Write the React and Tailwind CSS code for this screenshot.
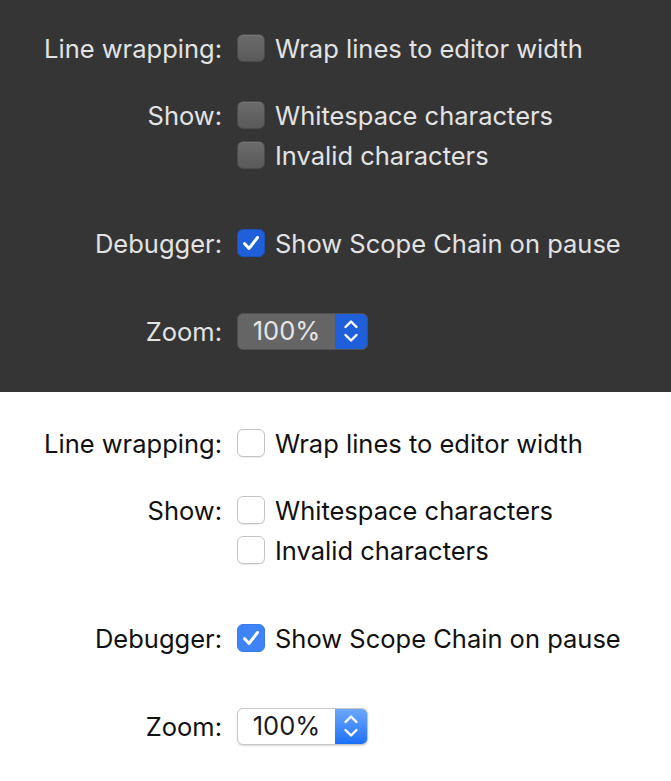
const THEMES = {
  dark: {
    wrap: 'bg-[#353535] pt-[28px] pb-[41px] text-[#e3e3e3]',
    box: 'bg-gradient-to-b from-[#6b6b6b] to-[#5a5a5a] border border-[#4a4a4a] shadow-[inset_0_1px_0_rgba(255,255,255,0.08)]',
    checked: 'bg-[#1f5fd9] border border-[#1a52bd]',
    select: 'bg-[#656565] border border-[#505050] text-[#e6e6e6]',
    stepper: 'bg-[#1f5fd9]',
  },
  light: {
    wrap: 'bg-white pt-[31px] pb-[35px] text-[#111111]',
    box: 'bg-white border border-[#c4c4c4] shadow-[0_1px_1px_rgba(0,0,0,0.08)]',
    checked: 'bg-[#3e84f7] border border-[#3a7bea]',
    select: 'bg-white border border-[#c8c8c8] shadow-[0_1px_2px_rgba(0,0,0,0.15)] text-[#1c1c1c]',
    stepper: 'bg-gradient-to-b from-[#6aa8fd] to-[#1a6ff7]',
  },
};

function Checkbox({ theme, checked, label }) {
  const t = THEMES[theme];
  return (
    <div className="flex items-center h-[40px]">
      <div className={`w-[28px] h-[28px] rounded-[6px] flex items-center justify-center ${checked ? t.checked : t.box}`}>
        {checked && (
          <svg width="22" height="22" viewBox="0 0 22 22" fill="none">
            <path d="M4.5 11.5l4.5 5 8.5-11" stroke="white" strokeWidth="3" strokeLinecap="round" strokeLinejoin="round" />
          </svg>
        )}
      </div>
      <span className="ml-[10px] whitespace-nowrap pt-[2px]">{label}</span>
    </div>
  );
}

function Row({ label, children, className = '' }) {
  return (
    <div className={`grid grid-cols-[222px_1fr] ${className}`}>
      <div className="h-[40px] pt-[2px] flex items-center justify-end whitespace-nowrap">{label}</div>
      <div className="pl-[15px]">{children}</div>
    </div>
  );
}

function ZoomSelect({ theme }) {
  const t = THEMES[theme];
  return (
    <div className="h-[40px] flex items-center">
      <div className={`flex w-[131px] h-[37px] rounded-[6px] overflow-hidden ${t.select}`}>
        <div className="flex-1 flex items-center justify-center pt-[1px]">100%</div>
        <div className={`w-[32px] flex items-center justify-center ${t.stepper}`}>
          <svg width="20" height="28" viewBox="0 0 20 28" fill="none">
            <path d="M4.5 10l5.5-5.5 5.5 5.5" stroke="white" strokeWidth="2.4" strokeLinecap="round" strokeLinejoin="round" />
            <path d="M4.5 18l5.5 5.5 5.5-5.5" stroke="white" strokeWidth="2.4" strokeLinecap="round" strokeLinejoin="round" />
          </svg>
        </div>
      </div>
    </div>
  );
}

function Panel({ theme }) {
  return (
    <div className={`${THEMES[theme].wrap} text-[25.5px]`}>
      <Row label="Line wrapping:">
        <Checkbox theme={theme} label="Wrap lines to editor width" />
      </Row>
      <Row label="Show:" className="mt-[27px]">
        <Checkbox theme={theme} label="Whitespace characters" />
        <Checkbox theme={theme} label="Invalid characters" />
      </Row>
      <Row label="Debugger:" className="mt-[48px]">
        <Checkbox theme={theme} checked label="Show Scope Chain on pause" />
      </Row>
      <Row label="Zoom:" className="mt-[48px]">
        <ZoomSelect theme={theme} />
      </Row>
    </div>
  );
}

export default function App() {
  return (
    <div className="w-[671px] h-[781px] overflow-hidden font-['Inter',sans-serif]">
      <Panel theme="dark" />
      <Panel theme="light" />
    </div>
  );
}
